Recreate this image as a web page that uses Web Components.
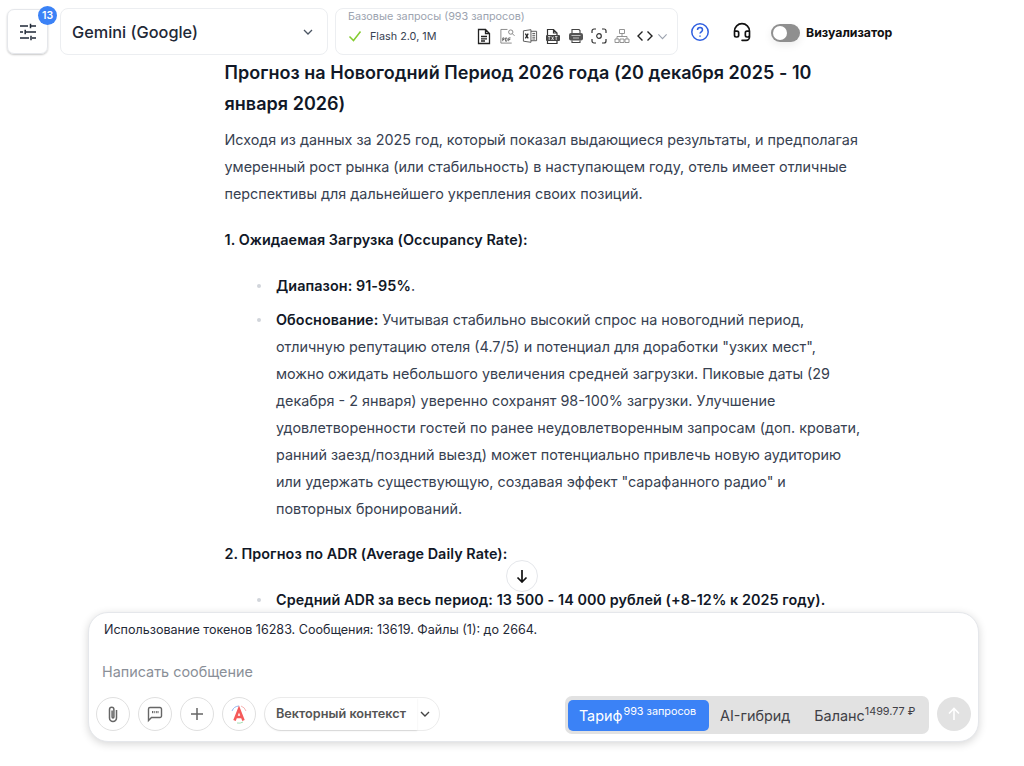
<!DOCTYPE html>
<html lang="ru"><head><meta charset="utf-8"><title>Chat</title>
<style>
html,body{margin:0;height:100%;background:#fff;overflow:hidden}
body{font-family:Inter,"Noto Sans",sans-serif;color:#111827}
</style></head><body>
<template id="t-app"><style>
:host{display:flex;flex-direction:column;width:1024px;height:766px;position:relative;overflow:hidden;background:#fff}
.scroll{flex:1;min-height:0;overflow:hidden}
</style>
<slot name="top"></slot><div class="scroll"><slot name="body"></slot></div><slot name="over"></slot></template>

<template id="t-top"><style>
:host{display:flex;align-items:flex-start;height:57px;box-sizing:border-box;padding:8px 0 0 7px;flex:none;font-family:Inter,sans-serif}
.set{width:41px;height:45px;margin-top:1px;box-sizing:border-box;border:1px solid #e5e7eb;border-radius:7px;box-shadow:0 1px 2px rgba(0,0,0,.22);display:flex;align-items:center;justify-content:center;position:relative}
.badge{position:absolute;left:30px;top:-4px;width:19px;height:19px;border-radius:50%;background:#3b82f6;color:#fff;font-size:10.500px;font-weight:600;display:flex;align-items:center;justify-content:center}
.model{width:268px;height:47px;margin-left:12px;box-sizing:border-box;border:1px solid #eceef1;border-radius:8px;display:flex;align-items:center;justify-content:space-between;padding:0 13px 0 11px;font-size:16.300px;font-weight:500;color:#1f2937}
.tier{width:343px;height:47px;margin-left:7px;box-sizing:border-box;border:1px solid #eceef1;border-radius:8px;padding:1px 9px 0 12px;}
.cap{font-size:10.800px;line-height:13px;color:#9ca3af}
.row{display:flex;align-items:center;height:24px;margin-top:1px;font-size:10.800px;color:#374151}
.row .ck{margin-right:8px;display:flex}
.row .name{flex:1}
.icons{display:flex;align-items:center;gap:7px}
.tools{display:flex;align-items:center;margin-left:12px;height:47px}
.q{width:20px;height:20px;display:flex}
.head{margin-left:22px;display:flex}
.sw{margin-left:19px;margin-top:2px;width:29px;height:18px;border-radius:9px;background:#8f8f8f;position:relative;box-shadow:0 3px 8px rgba(0,0,0,.08)}
.sw i{position:absolute;left:2px;top:2px;width:14px;height:14px;border-radius:50%;background:#fff}
.vl{margin-left:6px;margin-top:2px;font-size:12.300px;font-weight:700;color:#111}
svg{display:block}
</style>
<div class="set"><svg width="20" height="20" viewBox="0 0 20 20" fill="none" stroke="#1f2937" stroke-width="1.500"><path d="M2 4h8M13 4h5M12.500 1.800v4.400M2 10h3M8 10h10M7.200 7.800v4.400M2 16h9M14 16h4M13 13.800v4.400"/></svg><span class="badge">13</span></div>
<div class="model"><span>Gemini (Google)</span><svg width="12" height="12" viewBox="0 0 12 12" fill="none" stroke="#4b5563" stroke-width="1.300"><path d="M2 4l4 4 4-4"/></svg></div>
<div class="tier"><div class="cap">Базовые запросы (993 запросов)</div>
<div class="row"><span class="ck"><svg width="14" height="14" viewBox="0 0 14 14" fill="none" stroke="#84cc30" stroke-width="1.500"><path d="M1.500 7.500l4 4 7-9"/></svg></span><span class="name">Flash 2.0, 1M</span>
<span class="icons">
<svg width="16" height="17" viewBox="0 0 16 17" fill="none" stroke="#222" stroke-width="1.300"><path d="M2.500 1.500h7l4 4v10h-11zM9.500 1.500v4h4M5 8.500h6M5 10.800h6M5 13h4"/></svg>
<svg width="16" height="17" viewBox="0 0 17 17" fill="none" stroke="#777" stroke-width=".9"><path d="M9 1H2v14.500h11.500"/><circle cx="12.500" cy="3.800" r="2.300"/><path d="M14.200 5.500l2.300 2.300"/><path d="M4 13.500v-3.500h1.400v1.700H4M7 10v3.500h1.200l.6-1.700-.6-1.800zM10.300 13.500V10h2M10.300 11.700h1.700" stroke="#555"/></svg>
<svg width="16" height="16" viewBox="0 0 17 16" fill="none" stroke="#555" stroke-width="1"><path d="M1.500 2.500l8-1.200v13.400l-8-1.200zM9.500 3h6v10h-6M11 5.300h3M11 7.300h3M11 9.300h3M11 11.200h3"/><path d="M3.600 5.500l3 5M6.600 5.500l-3 5" stroke="#222" stroke-width="1.300"/></svg>
<svg width="16" height="17" viewBox="0 0 16 17" fill="none" stroke="#333" stroke-width="1.200"><path d="M2.500 7V1.500h6l3.500 3.500v2M2.500 13v2.500h9.500V13M8.500 1.500V5H12"/><rect x="1" y="7" width="14" height="6" rx="1" fill="#444" stroke="none"/><path d="M3 8.500h2.500M4.200 8.500v3.500M6.600 8.500l2 3.500M8.600 8.500l-2 3.500M10 8.500h2.500M11.200 8.500v3.500" stroke="#fff" stroke-width=".7"/></svg>
<svg width="16" height="16" viewBox="0 0 16 16" fill="none" stroke="#444" stroke-width="1.100"><path d="M4 5V1.500h7l1 1V5"/><rect x="1" y="5" width="14" height="7.500" rx="2" fill="#555" stroke="none"/><path d="M4 12.500v2h8v-2"/><path d="M3.500 7.500h9M5 10h6" stroke="#ddd" stroke-width=".8"/></svg>
<svg width="16" height="16" viewBox="0 0 16 16" fill="none" stroke="#333" stroke-width="1.200"><path d="M1 5V3a2 2 0 012-2h2M11 1h2a2 2 0 012 2v2M15 11v2a2 2 0 01-2 2h-2M5 15H3a2 2 0 01-2-2v-2"/><circle cx="8" cy="8" r="2.300"/></svg>
<svg width="16" height="16" viewBox="0 0 16 16" fill="none" stroke="#888" stroke-width=".9"><path d="M5.500 1.500h5v4h-5zM8 5.500v3M3 11V8.500h10V11M1 11h4v3.500H1zM6 11h4v3.500H6zM11 11h4v3.500h-4z"/></svg>
<svg width="16" height="14" viewBox="0 0 16 14" fill="none" stroke="#222" stroke-width="1.400"><path d="M5.500 2.500L1 7l4.500 4.500M10.500 2.500L15 7l-4.500 4.500"/></svg>
<svg width="11" height="11" viewBox="0 0 12 12" fill="none" stroke="#9ca3af" stroke-width="1.200" style="margin-left:-3px"><path d="M1.500 3.800L6 8.300l4.500-4.500"/></svg>
</span></div></div>
<div class="tools">
<span class="q"><svg width="20" height="20" viewBox="0 0 20 20" fill="none" stroke="#2f5fe0" stroke-width="1.500"><circle cx="10" cy="10" r="8.200"/><path d="M7.500 8a2.500 2.500 0 115 0c0 1.700-2.500 1.900-2.500 3.600"/><path d="M10 13.500v1.200"/></svg></span>
<span class="head"><svg width="20" height="20" viewBox="0 0 24 24" fill="none" stroke="#111" stroke-width="2" stroke-linecap="round" stroke-linejoin="round"><path d="M3 11h3a2 2 0 012 2v3a2 2 0 01-2 2H5a2 2 0 01-2-2v-5Zm0 0a9 9 0 1118 0m0 0v5a2 2 0 01-2 2h-1a2 2 0 01-2-2v-3a2 2 0 012-2h3ZM21 16v2a4 4 0 01-4 4h-5"/></svg></span>
<span class="sw"><i></i></span><span class="vl">Визуализатор</span></div></template>

<template id="t-doc"><style>
:host{display:block;width:637.500px;margin:0 0 0 224.500px;font-family:Inter,sans-serif;font-size:14.370px;line-height:27px;color:#374151}
::slotted(h2){margin:0 0 7px;font-size:18px;line-height:31px;font-weight:600;color:#111827;letter-spacing:.03px}
::slotted(p){margin:0 0 19px}
::slotted(h4){margin:0 0 19px;font-size:14.370px;line-height:27px;font-weight:600;color:#111827;letter-spacing:.06px}
</style><slot></slot></template>

<template id="t-li"><style>
:host{display:block;position:relative;padding-left:51.500px;margin-bottom:7px}
:host::before{content:"";position:absolute;left:32px;top:12px;width:4px;height:4px;border-radius:50%;background:#d1d5db}
::slotted(b){font-weight:600;color:#111827;letter-spacing:.07px}
</style><slot></slot></template>

<template id="t-comp"><style>
:host{position:absolute;left:88px;top:612px;width:891px;height:130px;box-sizing:border-box;background:#fff;border:1px solid #e5e7eb;border-radius:20px;box-shadow:0 2px 8px rgba(0,0,0,.16);font-family:Inter,sans-serif;padding:9px 7px 0 7px;display:flex;flex-direction:column}
.use{font-size:12.550px;line-height:16px;color:#1f2937;padding-left:8px}
.ph{font-size:14.400px;line-height:20px;color:#8a8f98;margin-top:24px;padding-left:6px}
.bar{display:flex;align-items:flex-start;margin-top:14px;height:38px}
.rd{width:34px;height:34px;margin-top:1px;box-sizing:border-box;border:1px solid #e0e0e0;border-radius:50%;display:flex;align-items:center;justify-content:center;margin-right:8px;flex:none}
.vec{display:flex;align-items:center;height:34px;width:176px;margin-top:1px;box-sizing:border-box;border:1px solid #ececec;border-radius:17px;flex:none}
.vec span{width:152px;height:32px;box-sizing:border-box;padding-left:11px;line-height:32px;font-size:12.700px;font-weight:600;color:#555;border-radius:16px 0 0 16px;box-shadow:0 1px 2px rgba(0,0,0,.1);white-space:nowrap;flex:none}
.vec svg{margin-left:2px}
.seg{margin-left:auto;display:flex;align-items:center;height:38px;width:364px;box-sizing:border-box;background:#e2e2e2;border-radius:7px;padding:0 3px;font-size:14.400px;color:#3f3f46}
.seg .on{background:#3b82f6;color:#fff;width:141px;height:31px;border-radius:5px;display:flex;align-items:center;justify-content:center;flex:none;box-sizing:border-box;padding-right:2px}
.seg .o{display:flex;align-items:center;white-space:nowrap}
.seg sup{font-size:10.800px;line-height:13px;align-self:center;margin-top:-8px;padding-left:1px}
.send{width:34px;height:34px;margin-top:1px;border-radius:50%;background:#e2e2e2;margin-left:8px;display:flex;align-items:center;justify-content:center;flex:none}
svg{display:block}
</style>
<div class="use">Использование токенов 16283. Сообщения: 13619. Файлы (1): до 2664.</div>
<div class="ph">Написать сообщение</div>
<div class="bar">
<span class="rd"><svg width="18" height="18" viewBox="0 0 18 18" fill="none" stroke="#666" stroke-width="1.500"><path d="M12.500 5v8a3.500 3.500 0 01-7 0V4.500a2.200 2.200 0 014.400 0V12a.9.9 0 01-1.800 0V5.500"/></svg></span>
<span class="rd"><svg width="18" height="18" viewBox="0 0 18 18" fill="none" stroke="#666" stroke-width="1.400"><path d="M2.500 15.500V4a1.500 1.500 0 011.500-1.500h10A1.500 1.500 0 0115.500 4v7a1.500 1.500 0 01-1.500 1.500H5.500z"/><path d="M6.500 6v2.200M8.200 6v2.200M10.300 6v2.200M12 6v2.200" stroke-width="1"/></svg></span>
<span class="rd"><svg width="14" height="14" viewBox="0 0 14 14" fill="none" stroke="#666" stroke-width="1.500"><path d="M7 1v12M1 7h12"/></svg></span>
<span class="rd"><svg width="24" height="24" viewBox="0 0 24 24" fill="none"><path d="M5 9a8 8 0 017-5" stroke="#7aa7ee" stroke-width=".8"/><path d="M14 4a8 8 0 015 5" stroke="#f2a0a0" stroke-width=".8"/><path d="M10 21a8 8 0 006-1" stroke="#8fd6a0" stroke-width=".8"/><path d="M7.500 18.500L12 7l4.500 11.500M9 15h6" stroke="#f55a5a" stroke-width="2.600"/></svg></span>
<span class="vec"><span>Векторный контекст</span><svg width="12" height="12" viewBox="0 0 12 12" fill="none" stroke="#444" stroke-width="1.400"><path d="M2 4l4 4 4-4"/></svg></span>
<div class="seg"><span class="on">Тариф<sup>993 запросов</sup></span><span class="o" style="margin-left:11px">AI-гибрид</span><span class="o" style="margin-left:24px">Баланс<sup style="padding:0">1499.77 ₽</sup></span></div>
<span class="send"><svg width="16" height="16" viewBox="0 0 16 16" fill="none" stroke="#fff" stroke-width="1.600"><path d="M8 14V2.500M3 7.500l5-5 5 5"/></svg></span>
</div></template>

<template id="t-down"><style>
:host{position:absolute;left:506px;top:560px;width:32px;height:32px;box-sizing:border-box;background:#fff;border:1px solid #e5e7eb;border-radius:50%;display:flex;align-items:center;justify-content:center}
</style><svg width="14" height="14" viewBox="0 0 14 14" fill="none" stroke="#111" stroke-width="1.700"><path d="M7 1v12M2.500 8.500L7 13l4.500-4.500"/></svg></template>

<x-app>
<x-top slot="top"></x-top>
<x-doc slot="body">
<h2>Прогноз на Новогодний Период 2026 года (20 декабря 2025 - 10 января 2026)</h2>
<p>Исходя из данных за 2025 год, который показал выдающиеся результаты, и предполагая умеренный рост рынка (или стабильность) в наступающем году, отель имеет отличные перспективы для дальнейшего укрепления своих позиций.</p>
<h4>1. Ожидаемая Загрузка (Occupancy Rate):</h4>
<x-li><b>Диапазон: 91-95%</b>.</x-li>
<x-li style="margin-bottom:18px"><b>Обоснование:</b> Учитывая стабильно высокий спрос на новогодний период, отличную репутацию отеля (4.7/5) и потенциал для доработки "узких мест", можно ожидать небольшого увеличения средней загрузки. Пиковые даты (29 декабря - 2 января) уверенно сохранят 98-100% загрузки. Улучшение удовлетворенности гостей по ранее неудовлетворенным запросам (доп. кровати, ранний заезд/поздний выезд) может потенциально привлечь новую аудиторию или удержать существующую, создавая эффект "сарафанного радио" и повторных бронирований.</x-li>
<h4>2. Прогноз по ADR (Average Daily Rate):</h4>
<x-li><b>Средний ADR за весь период: 13 500 - 14 000 рублей (+8-12% к 2025 году).</b></x-li>
</x-doc>
<x-down slot="over"></x-down>
<x-comp slot="over"></x-comp>
</x-app>
<script>
for (const [tag,id] of [['x-app','t-app'],['x-top','t-top'],['x-doc','t-doc'],['x-li','t-li'],['x-comp','t-comp'],['x-down','t-down']]) {
  customElements.define(tag, class extends HTMLElement {
    constructor(){super();this.attachShadow({mode:'open'}).appendChild(document.getElementById(id).content.cloneNode(true));}
  });
}
</script>
</body></html>
